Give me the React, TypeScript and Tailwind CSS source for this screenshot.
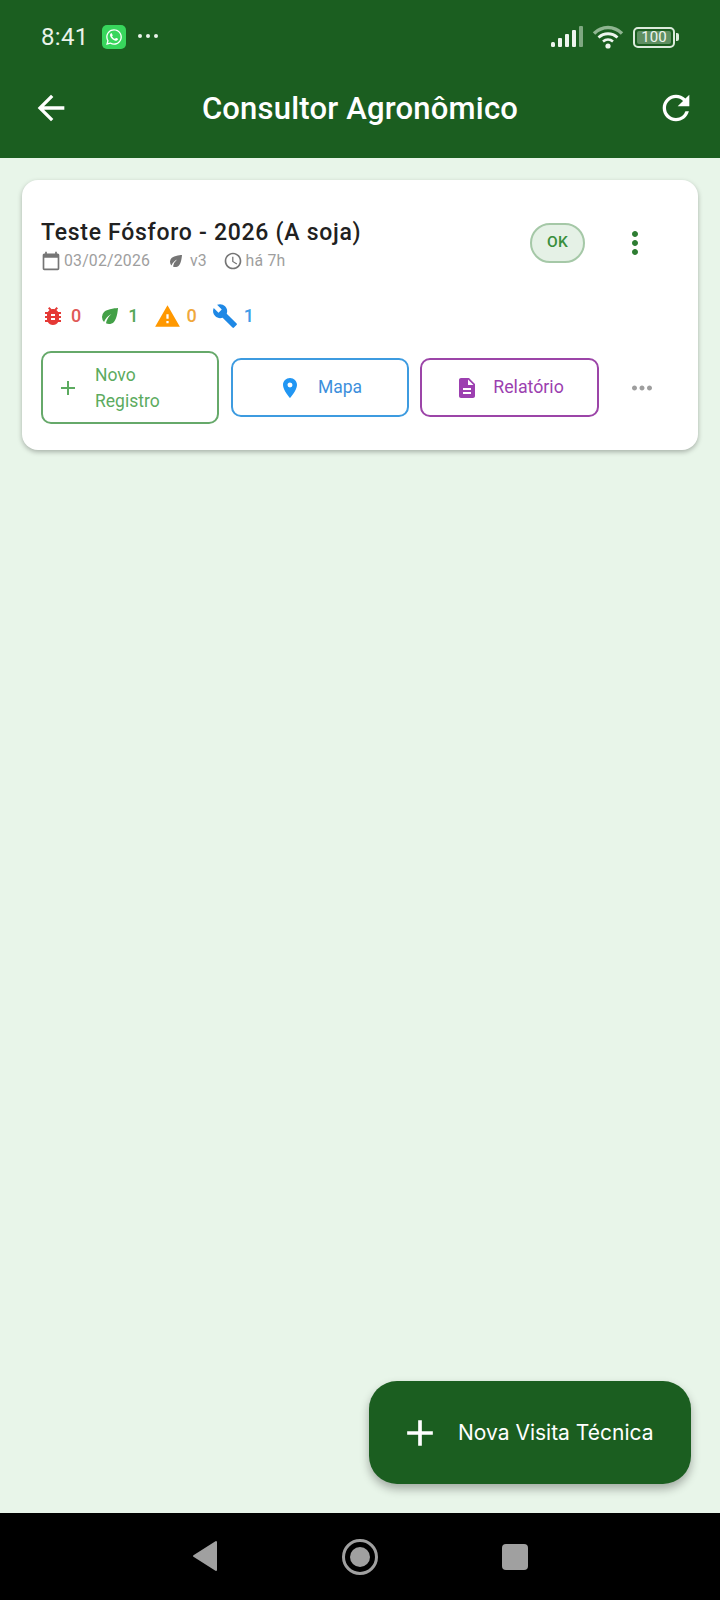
import React from 'react';
import {
  MdAccessTime,
  MdAdd,
  MdArrowBack,
  MdBugReport,
  MdBuild,
  MdCalendarToday,
  MdDescription,
  MdEco,
  MdLocationOn,
  MdMoreHoriz,
  MdMoreVert,
  MdRefresh,
  MdWarning,
} from 'react-icons/md';
import { FaWhatsapp } from 'react-icons/fa';

const StatusBar: React.FC = () => (
  <div className="h-[72px] pl-[41px] pr-[41px] flex items-start justify-between pt-[25px]">
    <div className="flex items-center h-[24px]">
      <span className="text-[24px] leading-[24px] text-[#eaf3ea] tracking-[0.3px]">8:41</span>
      <div className="ml-[14px] w-[24px] h-[24px] rounded-[5px] bg-[#38d65c] flex items-center justify-center">
        <FaWhatsapp className="text-white" size={18} />
      </div>
      <div className="ml-[12px] mt-[-3px] flex gap-[4px]">
        <span className="w-[4px] h-[4px] rounded-full bg-[#eaf3ea]" />
        <span className="w-[4px] h-[4px] rounded-full bg-[#eaf3ea]" />
        <span className="w-[4px] h-[4px] rounded-full bg-[#eaf3ea]" />
      </div>
    </div>
    <div className="flex items-center h-[24px] gap-[9px]">
      <svg width="32" height="22" viewBox="0 0 32 22">
        <rect x="0" y="16" width="4" height="5" rx="1.5" fill="#eef5ee" />
        <rect x="7" y="12" width="4" height="9" rx="1" fill="#eef5ee" />
        <rect x="14" y="8" width="4" height="13" rx="1" fill="#eef5ee" />
        <rect x="21" y="4" width="4" height="17" rx="1" fill="#eef5ee" />
        <rect x="28" y="0" width="4" height="21" rx="1" fill="#7fa881" />
      </svg>
      <svg width="32" height="24" viewBox="0 0 32 24" fill="none" strokeLinecap="butt">
        <path d="M2 8.5C10 0.5 22 0.5 30 8.5" stroke="#8fb591" strokeWidth="3.4" />
        <path d="M6.5 12.5C12 7.5 20 7.5 25.5 12.5" stroke="#eef5ee" strokeWidth="2.8" />
        <path d="M11 16.5C14 14 18 14 21 16.5" stroke="#eef5ee" strokeWidth="2.6" />
        <circle cx="16" cy="21" r="2.6" fill="#eef5ee" />
      </svg>
      <div className="flex items-center">
        <div className="w-[42px] h-[21px] rounded-[5px] border-2 border-[#dcebdc] p-[2px] flex">
          <div className="w-full rounded-[2px] bg-[#5f8f62] flex items-center justify-center text-[15px] leading-none text-[#eef5ee]">
            100
          </div>
        </div>
        <div className="ml-[1px] w-[3px] h-[8px] rounded-r-[2px] bg-[#dcebdc]" />
      </div>
    </div>
  </div>
);

const Stat: React.FC<{ icon: React.ReactNode; value: string; color: string; gap: string }> = ({ icon, value, color, gap }) => (
  <div className={`flex items-center ${gap}`}>
    {icon}
    <span className={`text-[18px] leading-none font-medium ${color}`}>{value}</span>
  </div>
);

export default function App() {
  return (
    <div className="relative w-[720px] h-[1600px] flex flex-col bg-[#e8f5e9] font-['Roboto',sans-serif]">
      <header className="h-[158px] bg-[#1b5e20] shrink-0">
        <StatusBar />
        <div className="h-[72px] pl-[31px] pr-[24px] flex items-center">
          <MdArrowBack className="text-white shrink-0" size={40} />
          <h1 className="flex-1 pr-[7px] text-center text-[31px] font-medium tracking-[0.2px] text-white leading-none">
            Consultor Agronômico
          </h1>
          <MdRefresh className="text-white shrink-0" size={40} />
        </div>
      </header>

      <main className="flex-1 px-[22px] pt-[22px]">
        <div className="h-[270px] bg-white rounded-[16px] shadow-[0_2px_5px_rgba(0,0,0,0.28)] pl-[19px] pr-[30px] pt-[39px]">
          <div className="flex justify-between h-[58px]">
            <div>
              <div className="text-[23px] leading-[27px] font-medium text-[#212121] tracking-[0.72px]">
                Teste Fósforo - 2026 (A soja)
              </div>
              <div className="mt-[5px] flex items-center text-[15.8px] leading-[20px] text-[#9e9e9e]">
                <MdCalendarToday className="text-[#757575]" size={20} />
                <span className="ml-[3px] tracking-[0.2px]">03/02/2026</span>
                <MdEco className="ml-[17px] text-[#757575]" size={18} />
                <span className="ml-[5px]">v3</span>
                <MdAccessTime className="ml-[16px] text-[#757575]" size={20} />
                <span className="ml-[3px] tracking-[0.2px]">há 7h</span>
              </div>
            </div>
            <div className="flex items-start mr-[15px] mt-[4px]">
              <div className="w-[55px] h-[40px] rounded-[20px] border-2 border-[#a5c8a7] bg-[#e5f1e6] flex items-center justify-center text-[15.5px] font-medium tracking-[0.3px] text-[#388e3c]">
                OK
              </div>
              <MdMoreVert className="ml-[32px] mt-[2px] text-[#2e7d32]" size={36} />
            </div>
          </div>

          <div className="mt-[27px] flex items-center h-[24px]">
            <Stat icon={<MdBugReport className="text-[#e53935]" size={24} />} value="0" color="text-[#e05a57]" gap="gap-[6px]" />
            <div className="ml-[17px]">
              <Stat icon={<MdEco className="text-[#43a047]" size={24} />} value="1" color="text-[#55a858]" gap="gap-[6px]" />
            </div>
            <div className="ml-[16px]">
              <Stat icon={<MdWarning className="text-[#ff9800]" size={27} />} value="0" color="text-[#f0a83c]" gap="gap-[5px]" />
            </div>
            <div className="ml-[15px]">
              <Stat icon={<MdBuild className="text-[#1e88e5]" size={26} />} value="1" color="text-[#3f9ce8]" gap="gap-[6px]" />
            </div>
          </div>

          <div className="mt-[23px] flex items-center">
            <button className="w-[178px] h-[73px] rounded-[10px] border-2 border-[#66a96a] flex items-center pl-[13px] text-[#5cab60]">
              <MdAdd size={24} />
              <span className="ml-[15px] text-left text-[17.5px] leading-[26px]">
                Novo
                <br />
                Registro
              </span>
            </button>
            <button className="ml-[12px] w-[178px] h-[59px] rounded-[10px] border-2 border-[#3d9be0] flex items-center justify-center text-[#3d8fdc]">
              <MdLocationOn className="text-[#2196f3]" size={24} />
              <span className="ml-[16px] text-[17.5px]">Mapa</span>
            </button>
            <button className="ml-[11px] w-[179px] h-[59px] rounded-[10px] border-2 border-[#9c45a8] flex items-center justify-center text-[#9c3fb0]">
              <MdDescription size={24} />
              <span className="ml-[14px] text-[17.8px]">Relatório</span>
            </button>
            <MdMoreHoriz className="ml-[28px] text-[#9e9e9e]" size={30} />
          </div>
        </div>
      </main>

      {/* FAB */}
      <button className="absolute left-[369px] top-[1381px] w-[322px] h-[103px] rounded-[28px] bg-[#1b5e20] shadow-[0_5px_10px_rgba(0,0,0,0.3)] flex items-center pl-[29px] text-white">
        <MdAdd size={44} />
        <span className="ml-[16px] font-['Inter',sans-serif] text-[21px]">Nova Visita Técnica</span>
      </button>

      <nav className="h-[87px] bg-black shrink-0 flex items-center justify-center">
        <svg width="26" height="32" viewBox="0 0 26 32" className="mt-[-1px]">
          <path d="M24 2V30L2 16Z" fill="#a0a0a0" stroke="#a0a0a0" strokeWidth="2" strokeLinejoin="round" />
        </svg>
        <div className="ml-[124px] w-[36px] h-[36px] rounded-full border-[3px] border-[#a0a0a0] flex items-center justify-center">
          <div className="w-[20px] h-[20px] rounded-full bg-[#a0a0a0]" />
        </div>
        <div className="ml-[124px] w-[26px] h-[26px] rounded-[4px] bg-[#a0a0a0]" />
      </nav>
    </div>
  );
}
